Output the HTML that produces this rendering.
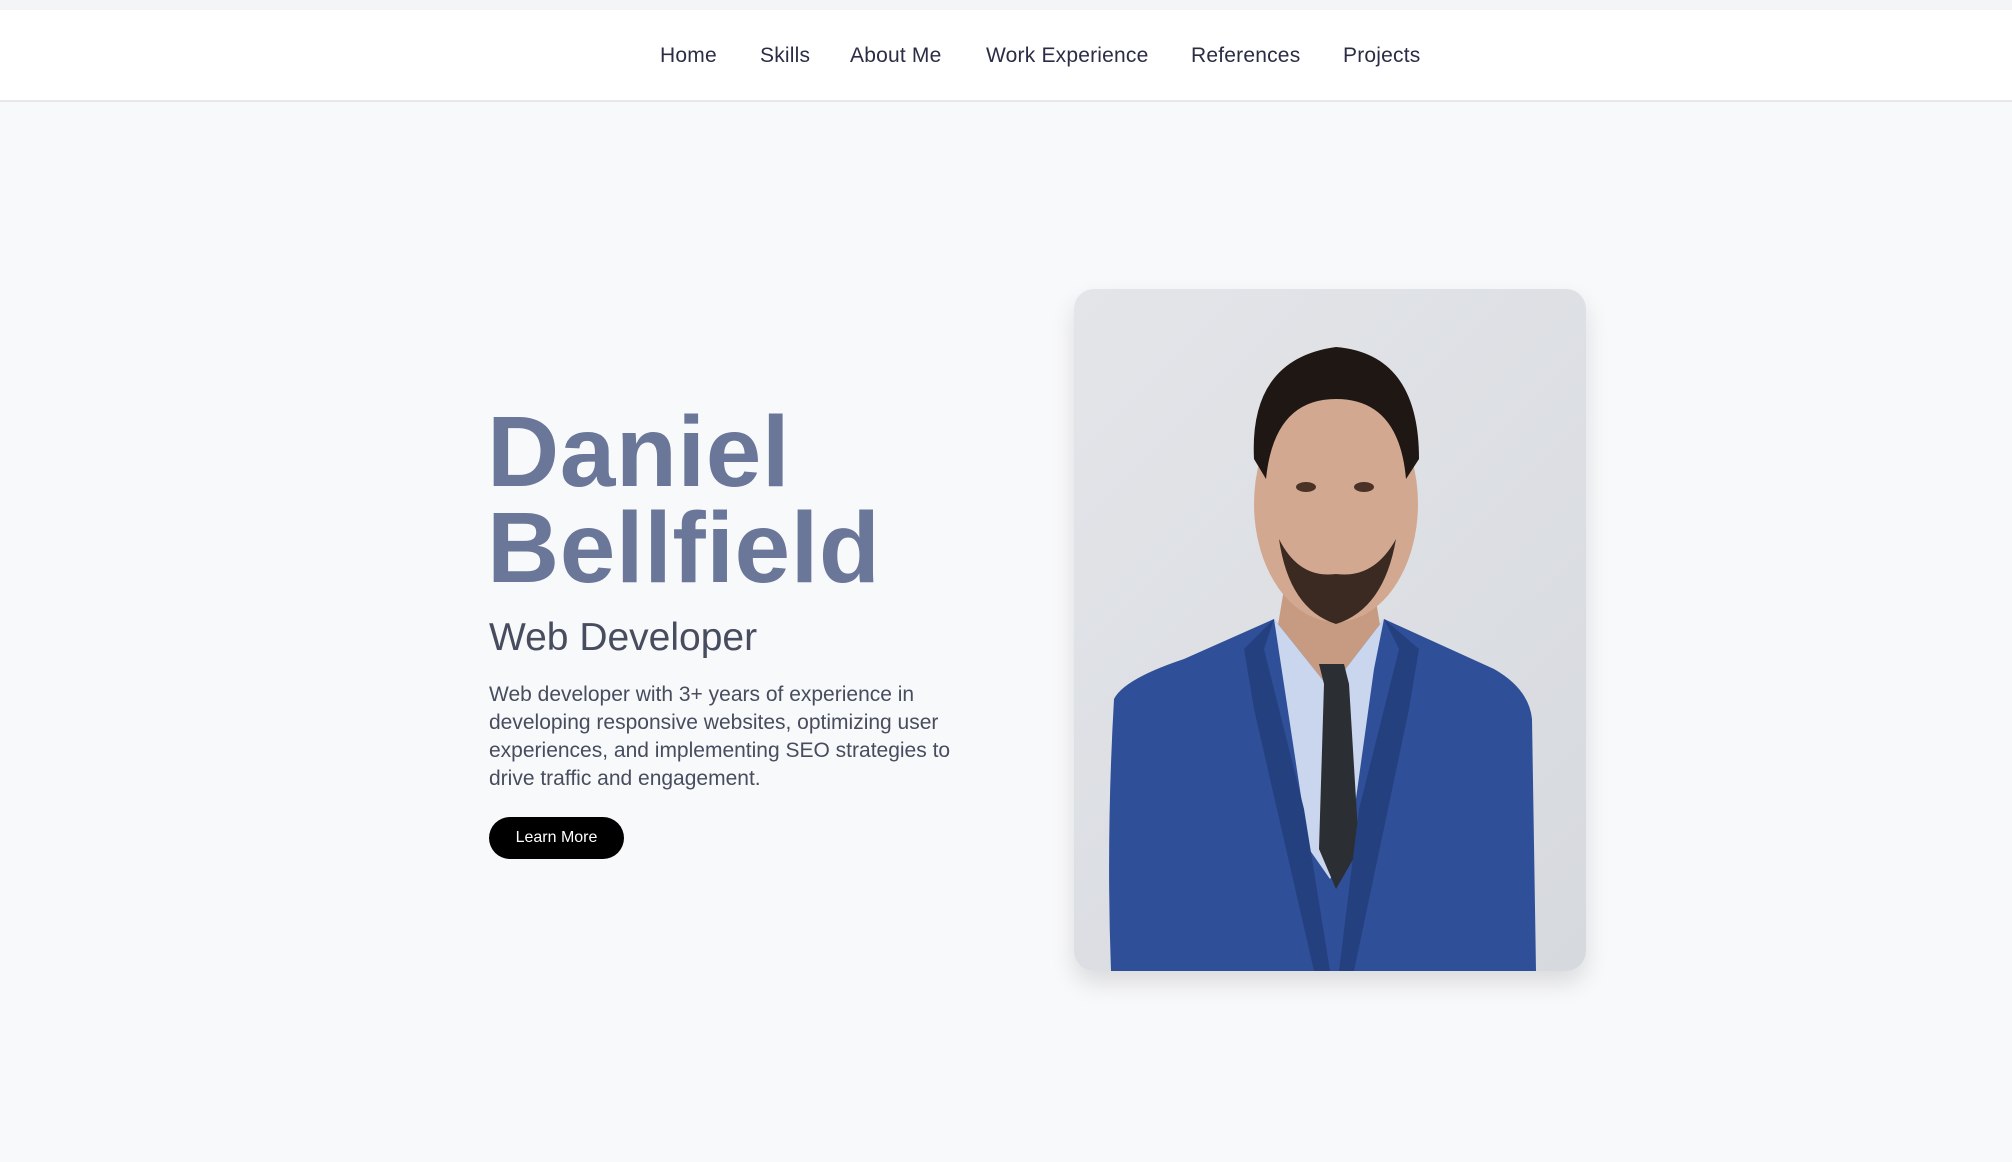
<!DOCTYPE html>
<html><head><meta charset="utf-8"><style>
*{margin:0;padding:0;box-sizing:border-box}
body{width:2012px;height:1162px;background:#f8f9fb;font-family:"Liberation Sans",sans-serif;overflow:hidden;position:relative}
.top{position:absolute;left:0;top:0;width:2012px;height:10px;background:#f4f5f7}
nav{position:absolute;left:0;top:10px;width:2012px;height:92px;background:#fff;border-bottom:2px solid #e5e7eb}
nav a{position:absolute;top:34px;font-size:21px;color:#2a2d45;text-decoration:none;letter-spacing:0.2px}
h1{position:absolute;left:487px;top:404px;font-size:100px;line-height:96px;font-weight:bold;color:#6a7799;letter-spacing:0.5px}
h2{position:absolute;left:489px;top:616px;font-size:39px;font-weight:normal;color:#474d5e}
p{position:absolute;left:489px;top:681px;width:500px;font-size:21px;line-height:28px;color:#474d5e}
.btn{position:absolute;left:489px;top:817px;width:135px;height:42px;border-radius:21px;background:#000;color:#fff;font-size:16px;line-height:42px;text-align:center}
.card{position:absolute;left:1074px;top:289px;width:512px;height:682px;border-radius:20px;overflow:hidden;background:linear-gradient(135deg,#e3e5e9,#d6d9de);box-shadow:0 12px 24px rgba(0,0,0,0.12)}
</style></head><body>
<div class="top"></div>
<nav>
<a style="left:660px">Home</a>
<a style="left:760px">Skills</a>
<a style="left:850px">About Me</a>
<a style="left:986px">Work Experience</a>
<a style="left:1191px">References</a>
<a style="left:1343px">Projects</a>
</nav>
<h1>Daniel<br>Bellfield</h1>
<h2>Web Developer</h2>
<p>Web developer with 3+ years of experience in developing responsive websites, optimizing user experiences, and implementing SEO strategies to drive traffic and engagement.</p>
<div class="btn">Learn More</div>
<div class="card"><svg width="512" height="682" viewBox="0 0 512 682">
<path d="M210 300 L300 300 L310 360 L256 420 L200 360Z" fill="#c79a82"/>
<path d="M40 410 Q50 390 110 370 L200 330 L256 400 L310 330 L420 380 Q455 400 458 430 L462 682 L37 682 Q32 550 40 410Z" fill="#2f4f98"/>
<path d="M200 330 L256 400 L310 330 L300 380 L275 560 L256 590 L235 560 Z" fill="#c9d6ee"/>
<path d="M245 375 L270 375 L275 395 L285 560 L262 600 L245 560 L250 395Z" fill="#2b2e33"/>
<path d="M200 330 L190 360 L230 520 L256 682 L240 682 L180 420 L170 360Z" fill="#24407f"/>
<path d="M310 330 L325 360 L285 520 L265 682 L280 682 L335 420 L345 360Z" fill="#24407f"/>
<ellipse cx="262" cy="215" rx="82" ry="118" fill="#d2a890"/>
<path d="M205 250 Q215 320 262 335 Q310 320 322 250 Q300 290 262 285 Q225 290 205 250Z" fill="#3a2a22"/>
<path d="M180 170 Q175 70 262 58 Q345 65 345 170 L332 190 Q325 110 262 110 Q200 110 192 190Z" fill="#1f1714"/>
<ellipse cx="232" cy="198" rx="10" ry="5" fill="#4a3326"/>
<ellipse cx="290" cy="198" rx="10" ry="5" fill="#4a3326"/>
</svg></div>
</body></html>
